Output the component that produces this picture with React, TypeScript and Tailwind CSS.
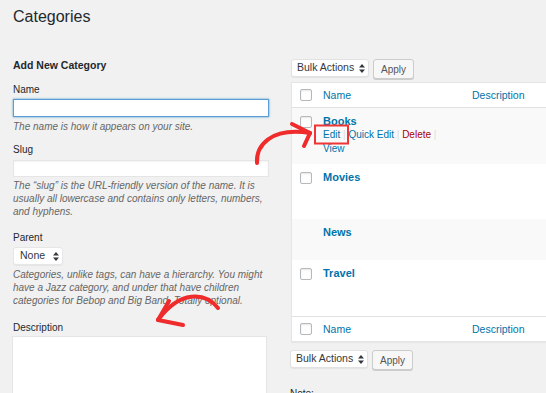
import React from 'react';

const font = { fontFamily: '"Liberation Sans", Arial, sans-serif' };

const Checkbox: React.FC = () => (
    <div className="w-[12px] h-[12px] shrink-0 rounded-[2px] border border-[#b4b9be] bg-white shadow-[inset_0_1px_2px_rgba(0,0,0,0.1)]" />
);

const UpDown: React.FC = () => (
    <svg width="6" height="9" viewBox="0 0 6 9" className="shrink-0">
        <path d="M3 0 L6 3.5 L0 3.5 Z" fill="#32373c" />
        <path d="M3 9 L6 5.5 L0 5.5 Z" fill="#32373c" />
    </svg>
);

const Toolbar: React.FC = () => (
    <div className="flex items-start">
        <div className="w-[78px] h-[18px] bg-white border border-[#e2e2e2] rounded-[3px] shadow-[0_1px_1px_rgba(0,0,0,0.06)] flex items-center justify-between pl-[5px] pr-[3px] text-[10.5px] text-[#32373c]">
            <span>Bulk Actions</span>
            <UpDown />
        </div>
        <div className="ml-[4px] w-[41px] h-[20px] bg-[#f7f7f7] border border-[#cccccc] rounded-[3px] shadow-[0_1px_0_#cccccc] flex items-center justify-center text-[10px] text-[#555]">
            Apply
        </div>
    </div>
);

interface RowProps {
    name: string;
    height: string;
    striped?: boolean;
    checkbox?: boolean;
    actions?: boolean;
}

const Row: React.FC<RowProps> = ({ name, height, striped, checkbox = true, actions }) => (
    <div className={`flex pt-[6px] ${height} ${striped ? 'bg-[#f9f9f9]' : 'bg-white'}`}>
        <div className="w-[31px] pl-[8px] pt-[2px] shrink-0">{checkbox && <Checkbox />}</div>
        <div className="flex flex-col">
            <span className="text-[11px] leading-[14px] font-bold text-[#0073aa]">{name}</span>
            {actions && (
                <>
                    <span className="text-[10px] leading-[14px] whitespace-nowrap">
                        <span className="text-[#0073aa]">Edit</span>
                        <span className="text-[#ddd]"> | </span>
                        <span className="text-[#0073aa]">Quick Edit</span>
                        <span className="text-[#ddd]"> | </span>
                        <span className="text-[#a00]">Delete</span>
                        <span className="text-[#ddd]"> | </span>
                    </span>
                    <span className="text-[10px] leading-[14px] text-[#0073aa]">View</span>
                </>
            )}
        </div>
    </div>
);

const HeadRow: React.FC<{ top?: boolean }> = ({ top }) => (
    <div className={`flex items-center h-[25px] bg-white ${top ? 'border-b' : 'border-t'} border-[#e1e1e1]`}>
        <div className="w-[31px] pl-[8px] shrink-0">
            <Checkbox />
        </div>
        <span className="w-[149px] shrink-0 text-[10.5px] leading-[14px] text-[#0073aa]">Name</span>
        <span className="text-[10.5px] leading-[14px] text-[#0073aa]">Description</span>
    </div>
);

const Hint: React.FC<{ lines: string[] }> = ({ lines }) => (
    <div className="italic text-[10px] leading-[13px] text-[#666]">
        {lines.map((l) => (
            <div key={l} className="whitespace-nowrap">{l}</div>
        ))}
    </div>
);

export default function App() {
    return (
        <div style={font} className="relative w-[546px] h-[393px] overflow-hidden bg-[#f1f1f1] flex items-start text-[#23282d]">
            {/* Left: add form */}
            <div className="w-[270px] pl-[13px] shrink-0">
                <h1 className="pt-[7px] text-[16px] leading-[20px] text-[#23282d]">Categories</h1>
                <h2 className="mt-[31px] text-[10.5px] leading-[14px] font-bold">Add New Category</h2>

                <div className="mt-[11px] text-[10px] leading-[13px]">Name</div>
                <div className="mt-[3px] h-[18px] w-[256px] bg-white border border-[#5b9dd9] shadow-[0_0_2px_rgba(30,140,190,0.8)]" />
                <div className="mt-[3px]">
                    <Hint lines={['The name is how it appears on your site.']} />
                </div>

                <div className="mt-[10px] text-[10px] leading-[13px]">Slug</div>
                <div className="mt-[4px] h-[17px] w-[256px] bg-white border border-[#e5e5e5] shadow-[inset_0_1px_2px_rgba(0,0,0,0.05)]" />
                <div className="mt-[2px]">
                    <Hint
                        lines={[
                            'The \u201cslug\u201d is the URL-friendly version of the name. It is',
                            'usually all lowercase and contains only letters, numbers,',
                            'and hyphens.',
                        ]}
                    />
                </div>

                <div className="mt-[13px] text-[10px] leading-[13px]">Parent</div>
                <div className="mt-[3px] w-[50px] h-[18px] bg-white border border-[#e6e6e6] rounded-[3px] shadow-[0_1px_1px_rgba(0,0,0,0.05)] flex items-center justify-between pl-[6px] pr-[3px] text-[10.5px] text-[#32373c]">
                    <span>None</span>
                    <UpDown />
                </div>
                <div className="mt-[3px]">
                    <Hint
                        lines={[
                            'Categories, unlike tags, can have a hierarchy. You might',
                            'have a Jazz category, and under that have children',
                            'categories for Bebop and Big Band. Totally optional.',
                        ]}
                    />
                </div>

                <div className="mt-[14px] text-[10px] leading-[13px]">Description</div>
                <div className="mt-[2px] h-[90px] w-[255px] -ml-px bg-white border border-[#e5e5e5]" />
            </div>

            {/* Right: list table */}
            <div className="ml-[21px] w-[290px] shrink-0 pt-[59px]">
                <Toolbar />
                <div className="mt-[3px] bg-white border border-[#e5e5e5] shadow-[0_1px_1px_rgba(0,0,0,0.04)]">
                    <HeadRow top />
                    <Row name="Books" height="h-[56px]" striped actions />
                    <Row name="Movies" height="h-[55px]" />
                    <Row name="News" height="h-[41px]" striped checkbox={false} />
                    <Row name="Travel" height="h-[56px]" />
                    <HeadRow />
                </div>
                <div className="mt-[8px] -ml-px">
                    <Toolbar />
                </div>
                <div className="mt-[17px] -ml-px text-[10px] leading-[13px]">Note:</div>
            </div>

            {/* Annotation overlay */}
            <svg
                className="absolute inset-0 pointer-events-none"
                width="546"
                height="393"
                viewBox="0 0 546 393"
            >
                <rect x="315" y="125.5" width="33" height="18" fill="none" stroke="#ef3535" strokeWidth="2" />
                <g fill="none" stroke="#f02b2b" strokeWidth="4" strokeLinecap="round" strokeLinejoin="round">
                    <path d="M257 163 C 256 146, 270 127, 310 133" />
                    <path d="M310 133 L 292 124" />
                    <path d="M310 133 L 304 146" />
                    <path d="M218 308 C 205 292, 180 290, 158 320" />
                    <path d="M158 320 L 183 325" />
                    <path d="M158 320 L 169 301" />
                </g>
            </svg>
        </div>
    );
}
